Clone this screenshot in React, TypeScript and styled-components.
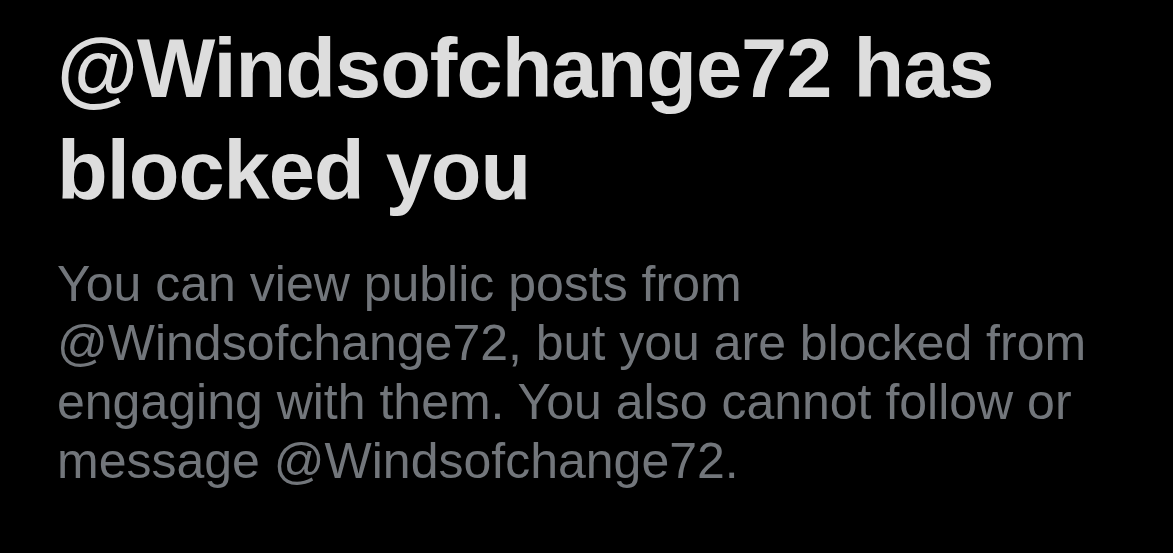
import React from "react";
import styled, { createGlobalStyle } from "styled-components";

const Global = createGlobalStyle`
  html, body { margin: 0; padding: 0; background: #000; }
  body { font-family: "Liberation Sans", Arial, sans-serif; }
`;

const Page = styled.main`
  width: 1173px;
  height: 553px;
  background: #000;
  box-sizing: border-box;
  padding: 18px 40px 0 57px;
  display: flex;
  flex-direction: column;
  gap: 33px;
`;

const Title = styled.h1`
  margin: 0;
  font-family: "Liberation Sans", Arial, sans-serif;
  font-weight: 700;
  font-size: 83px;
  line-height: 102px;
  letter-spacing: -1px;
  color: #dddddd;
`;

const Body = styled.p`
  margin: 0;
  font-family: "Liberation Sans", Arial, sans-serif;
  font-weight: 400;
  font-size: 50px;
  line-height: 59px;
  color: #72767b;
`;

export default function App() {
  return (
    <>
      <Global />
      <Page>
        <Title>
          @Windsofchange72 has
          <br />
          blocked you
        </Title>
        <Body>
          You can view public posts from
          <br />
          @Windsofchange72, but you are blocked from
          <br />
          engaging with them. You also cannot follow or
          <br />
          message @Windsofchange72.
        </Body>
      </Page>
    </>
  );
}
